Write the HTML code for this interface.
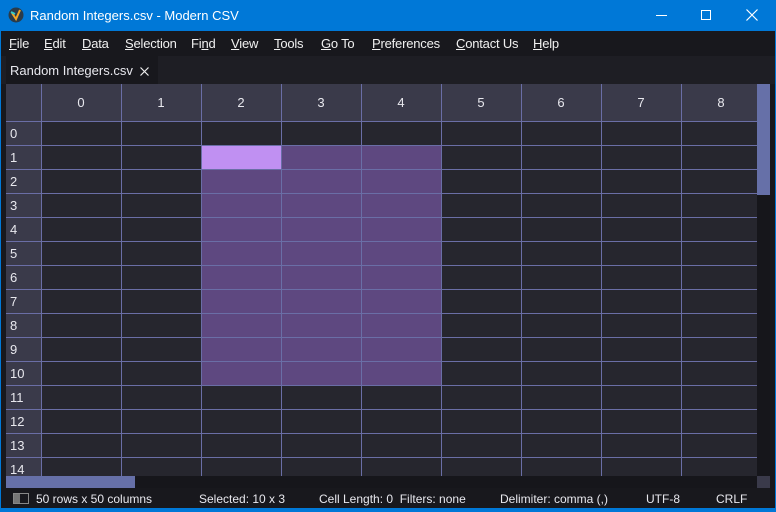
<!DOCTYPE html>
<html><head><style>
*{margin:0;padding:0;box-sizing:border-box}
body{width:776px;height:512px;overflow:hidden;background:#0078d7;font-family:"Liberation Sans",sans-serif;font-size:13px;color:#e8e8ee;position:relative}
.a{position:absolute}
.title{left:0;top:0;width:776px;height:31px;background:#0078d7;color:#fff}
.menu{left:1px;top:31px;width:774px;height:25px;background:#18181d}
.menu span{position:absolute;top:5px;color:#f0f0f0;letter-spacing:-0.2px}
.tabbar{left:1px;top:56px;width:774px;height:28px;background:#1e1e24}
.grid{left:6px;top:84px;width:751px;height:392px;background:#26262e;overflow:hidden}
.hl{position:absolute;left:0;width:751px;height:1px;background:#6a6ea6}
.vl{position:absolute;top:0;height:392px;width:1px;background:#6a6ea6}
.hn{position:absolute;top:11px;width:80px;text-align:center;font-size:13px}
.rn{position:absolute;left:4px;font-size:13px}
.status{left:1px;top:488px;width:774px;height:20px;background:#18181d;font-size:12px}
.status span{position:absolute;top:4px}
</style></head><body>
<div class="a title">
 <svg class="a" style="left:8px;top:7px" width="16" height="16" viewBox="0 0 16 16"><circle cx="8" cy="8" r="7.5" fill="#2a3b4a"/><path d="M4 6 L8 12 L12 3" stroke="#f5a623" stroke-width="2" fill="none"/><path d="M3 5 L7 7" stroke="#3cc" stroke-width="2"/></svg>
 <span class="a" style="left:30px;top:8px;font-size:13px">Random Integers.csv - Modern CSV</span>
 <div class="a" style="left:656px;top:15px;width:11px;height:1px;background:#fff"></div>
 <div class="a" style="left:701px;top:10px;width:10px;height:10px;border:1px solid #fff"></div>
 <svg class="a" style="left:746px;top:9px" width="12" height="12" viewBox="0 0 12 12"><path d="M0.5 0.5 L11.5 11.5 M11.5 0.5 L0.5 11.5" stroke="#fff" stroke-width="1.2"/></svg>
</div>
<div class="a menu">
 <span style="left:8px"><u>F</u>ile</span><span style="left:43px"><u>E</u>dit</span><span style="left:81px"><u>D</u>ata</span><span style="left:124px"><u>S</u>election</span><span style="left:190px">Fi<u>n</u>d</span><span style="left:230px"><u>V</u>iew</span><span style="left:273px"><u>T</u>ools</span><span style="left:320px"><u>G</u>o To</span><span style="left:371px"><u>P</u>references</span><span style="left:455px"><u>C</u>ontact Us</span><span style="left:532px"><u>H</u>elp</span>
</div>
<div class="a tabbar">
 <div class="a" style="left:5px;top:0;width:152px;height:28px;background:#18181d"></div>
 <span class="a" style="left:9px;top:7px">Random Integers.csv</span>
 <svg class="a" style="left:139px;top:11px" width="9" height="9" viewBox="0 0 9 9"><path d="M0.5 0.5 L8.5 8.5 M8.5 0.5 L0.5 8.5" stroke="#eee" stroke-width="1.2"/></svg>
</div>
<div class="a grid">
 <div class="a" style="left:0;top:0;width:751px;height:37px;background:#3a3a4a"></div>
 <div class="a" style="left:0;top:0;width:35px;height:392px;background:#3a3a4a"></div>
 <div class="a" style="left:195px;top:61px;width:240px;height:240px;background:#5e4880"></div>
 <div class="a" style="left:195px;top:61px;width:80px;height:24px;background:#c090f2"></div>
 <div class="hl" style="top:37px"></div><div class="hl" style="top:61px"></div><div class="hl" style="top:85px"></div><div class="hl" style="top:109px"></div><div class="hl" style="top:133px"></div><div class="hl" style="top:157px"></div><div class="hl" style="top:181px"></div><div class="hl" style="top:205px"></div><div class="hl" style="top:229px"></div><div class="hl" style="top:253px"></div><div class="hl" style="top:277px"></div><div class="hl" style="top:301px"></div><div class="hl" style="top:325px"></div><div class="hl" style="top:349px"></div><div class="hl" style="top:373px"></div>
 <div class="vl" style="left:35px"></div><div class="vl" style="left:115px"></div><div class="vl" style="left:195px"></div><div class="vl" style="left:275px"></div><div class="vl" style="left:355px"></div><div class="vl" style="left:435px"></div><div class="vl" style="left:515px"></div><div class="vl" style="left:595px"></div><div class="vl" style="left:675px"></div>
 <span class="hn" style="left:35px">0</span><span class="hn" style="left:115px">1</span><span class="hn" style="left:195px">2</span><span class="hn" style="left:275px">3</span><span class="hn" style="left:355px">4</span><span class="hn" style="left:435px">5</span><span class="hn" style="left:515px">6</span><span class="hn" style="left:595px">7</span><span class="hn" style="left:675px">8</span>
 <span class="rn" style="top:42px">0</span><span class="rn" style="top:66px">1</span><span class="rn" style="top:90px">2</span><span class="rn" style="top:114px">3</span><span class="rn" style="top:138px">4</span><span class="rn" style="top:162px">5</span><span class="rn" style="top:186px">6</span><span class="rn" style="top:210px">7</span><span class="rn" style="top:234px">8</span><span class="rn" style="top:258px">9</span><span class="rn" style="top:282px">10</span><span class="rn" style="top:306px">11</span><span class="rn" style="top:330px">12</span><span class="rn" style="top:354px">13</span><span class="rn" style="top:378px">14</span>
</div>
<div class="a" style="left:757px;top:84px;width:13px;height:392px;background:#16161b"></div>
<div class="a" style="left:757px;top:84px;width:13px;height:111px;background:#6670a8"></div>
<div class="a" style="left:770px;top:84px;width:5px;height:404px;background:#18181d"></div>
<div class="a" style="left:6px;top:476px;width:751px;height:12px;background:#16161b"></div>
<div class="a" style="left:6px;top:476px;width:129px;height:12px;background:#6670a8"></div>
<div class="a" style="left:757px;top:476px;width:13px;height:12px;background:#3a3a4a"></div>
<div class="a" style="left:1px;top:84px;width:5px;height:404px;background:#18181d"></div>
<div class="a status">
 <div class="a" style="left:12px;top:5px;width:16px;height:11px;border:1px solid #888;background:linear-gradient(to right,#777 0 6px,transparent 6px)"></div>
 <span style="left:35px">50 rows x 50 columns</span><span style="left:198px">Selected: 10 x 3</span><span style="left:318px">Cell Length: 0&nbsp; Filters: none</span><span style="left:499px">Delimiter: comma (,)</span><span style="left:645px">UTF-8</span><span style="left:715px">CRLF</span>
</div>
</body></html>
